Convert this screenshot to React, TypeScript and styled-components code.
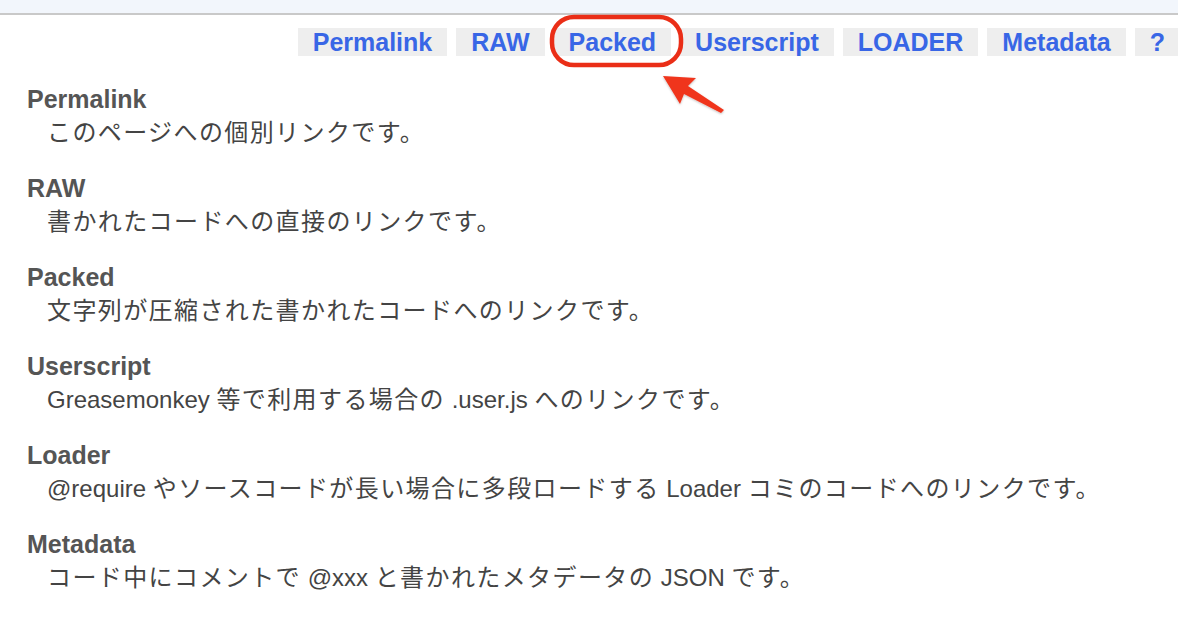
import styled, { createGlobalStyle } from "styled-components";

const GlobalStyle = createGlobalStyle`
  html, body {
    margin: 0;
    padding: 0;
    background: #ffffff;
    overflow: hidden;
  }
  body {
    font-family: "Liberation Sans", "Noto Sans CJK JP", sans-serif;
  }
`;

const Page = styled.div`
  position: relative;
  width: 1178px;
  height: 624px;
`;

const TopStrip = styled.div`
  height: 13px;
  background-color: #f2f6fc;
  border-bottom: 2px solid #c9c9c9;
`;

const NavRow = styled.nav`
  display: flex;
  justify-content: flex-end;
  gap: 9px;
  margin-top: 13px;
  margin-right: -2px;
`;

const NavButton = styled.a`
  display: block;
  height: 28px;
  padding: 0 15px;
  background-color: #eeeeee;
  color: #3866e6;
  font-family: "Liberation Sans", Arial, sans-serif;
  font-size: 25px;
  font-weight: 700;
  line-height: 28px;
  text-decoration: none;
  white-space: nowrap;
`;

const HelpList = styled.dl`
  margin: 27px 0 0;
  padding-left: 27px;
`;

const Term = styled.dt`
  color: #555555;
  font-size: 25px;
  font-weight: 700;
  line-height: 33px;
`;

const Desc = styled.dd`
  margin: 0 0 23px 20px;
  color: #444444;
  font-size: 24px;
  line-height: 33px;
  white-space: nowrap;
`;

// japanese runs are set a little wider than the latin ones
const Jp = styled.span`
  letter-spacing: 1.4px;
`;

// red annotation drawn over the nav bar
const Annotation = styled.svg`
  position: absolute;
  left: 0;
  top: 0;
  pointer-events: none;
`;

const navItems = ["Permalink", "RAW", "Packed", "Userscript", "LOADER", "Metadata", "?"];

const help: { term: string; text: string }[] = [
	{ term: "Permalink", text: "このページへの個別リンクです。" },
	{ term: "RAW", text: "書かれたコードへの直接のリンクです。" },
	{ term: "Packed", text: "文字列が圧縮された書かれたコードへのリンクです。" },
	{ term: "Userscript", text: "Greasemonkey 等で利用する場合の .user.js へのリンクです。" },
	{
		term: "Loader",
		text: "@require やソースコードが長い場合に多段ロードする Loader コミのコードへのリンクです。",
	},
	{ term: "Metadata", text: "コード中にコメントで @xxx と書かれたメタデータの JSON です。" },
];

const renderText = (text: string) =>
	text
		.split(/([A-Za-z0-9@. ]+)/)
		.filter(Boolean)
		.map((part, i) =>
			/^[A-Za-z0-9@. ]+$/.test(part) ? <span key={i}>{part}</span> : <Jp key={i}>{part}</Jp>,
		);

const App = () => {
	return (
		<Page>
			<GlobalStyle />
			<TopStrip />
			<NavRow>
				{navItems.map((item) => (
					<NavButton key={item} href="#">
						{item}
					</NavButton>
				))}
			</NavRow>
			<HelpList>
				{help.map((h) => (
					<div key={h.term}>
						<Term>{h.term}</Term>
						<Desc>{renderText(h.text)}</Desc>
					</div>
				))}
			</HelpList>
			<Annotation width="1178" height="130" viewBox="0 0 1178 130">
				<defs>
					<filter id="shadow" x="-20%" y="-20%" width="140%" height="140%">
						<feDropShadow dx="0" dy="1" stdDeviation="1" floodColor="#000" floodOpacity="0.25" />
					</filter>
				</defs>
				<rect
					x="552"
					y="17"
					width="129"
					height="48"
					rx="22"
					fill="none"
					stroke="#ea2e17"
					strokeWidth="4.5"
				/>
				<polygon
					points="663,76 696,78 688,86 724,110 721,113 684,94 680,104"
					fill="#f0361f"
					filter="url(#shadow)"
				/>
			</Annotation>
		</Page>
	);
};

export default App;
